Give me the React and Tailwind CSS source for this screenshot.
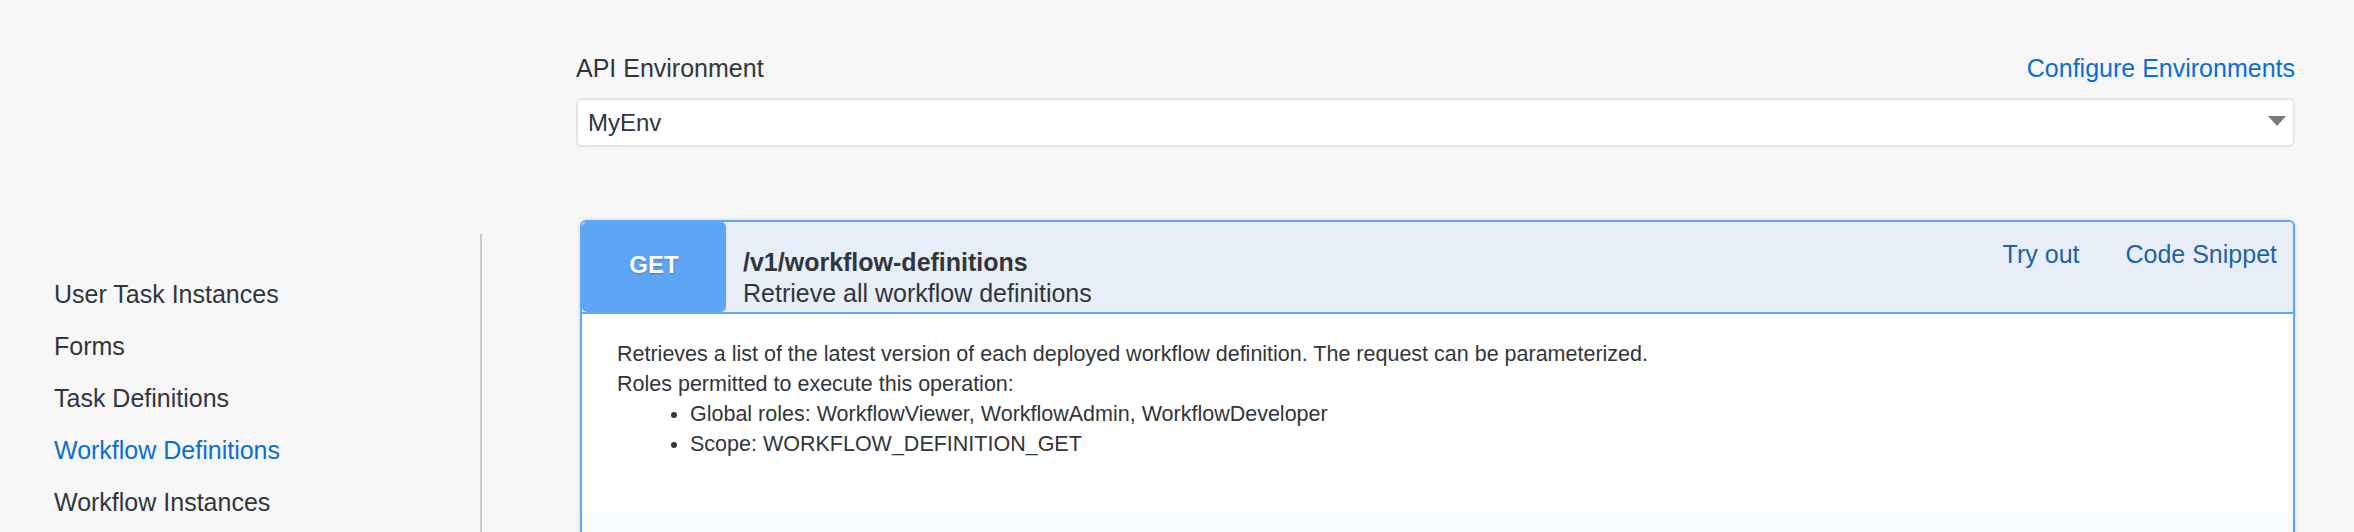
import { useState } from 'react';

const NAV = ['User Task Instances', 'Forms', 'Task Definitions', 'Workflow Definitions', 'Workflow Instances'];

const Sidebar = ({ active }) => (
  <aside className="w-[482px] shrink-0 mt-[234px] border-r-2 border-[#cccccc] pt-[34px]">
    {NAV.map(item => (
      <div
        key={item}
        className={`pl-[54px] h-[52px] leading-[52px] text-[25px] ${item === active ? 'text-[#0a6ed1]' : 'text-[#32363a]'}`}
      >
        {item}
      </div>
    ))}
  </aside>
);

const EnvSelect = ({ value }) => (
  <div>
    <div className="flex items-center justify-between leading-[30px] text-[25px]">
      <span className="text-[#32363a]">API Environment</span>
      <a className="text-[#0a6ed1] cursor-pointer">Configure Environments</a>
    </div>
    <div className="mt-[15px] h-[49px] bg-white border-2 border-[#e5e5e5] rounded-[6px] flex items-center justify-between pl-[10px] pr-[7px]">
      <span className="text-[24px] text-[#32363a]">{value}</span>
      <svg width="18" height="10" viewBox="0 0 18 10" className="-mt-[4px]">
        <polygon points="0,0 18,0 9,10" fill="#7a7a7a" />
      </svg>
    </div>
  </div>
);

const Endpoint = () => (
  <div className="mt-[73px] ml-[4px] border-2 border-[#62a6f5] rounded-t-[6px] shadow-[0_0_4px_rgba(0,0,0,0.15)] overflow-hidden">
    <div className="flex h-[92px] bg-[#e7eef7] border-b-2 border-[#62a6f5]">
      <div className="w-[144px] shrink-0 bg-[#5ea5f6] rounded-[5px] flex items-center justify-center pb-[4px]">
        <span className="text-white font-bold text-[24px] [text-shadow:0_1px_2px_rgba(0,0,0,0.25)]">GET</span>
      </div>
      <div className="flex-1 pl-[17px] pt-[25px]">
        <div className="font-bold text-[25px] leading-[30px] text-[#32363a]">/v1/workflow-definitions</div>
        <div className="text-[25px] leading-[33px] text-[#32363a]">Retrieve all workflow definitions</div>
      </div>
      <div className="flex gap-[46px] pt-[17px] pr-[16px] text-[25px] leading-[30px] text-[#2064a6]">
        <a className="cursor-pointer">Try out</a>
        <a className="cursor-pointer">Code Snippet</a>
      </div>
    </div>
    <div className="h-[199px] bg-white px-[35px] pt-[25px] text-[21.5px] leading-[30px] text-[#32363a]">
      <p>Retrieves a list of the latest version of each deployed workflow definition. The request can be parameterized.</p>
      <p>Roles permitted to execute this operation:</p>
      <ul className="list-disc pl-[73px]">
        <li>Global roles: WorkflowViewer, WorkflowAdmin, WorkflowDeveloper</li>
        <li>Scope: WORKFLOW_DEFINITION_GET</li>
      </ul>
    </div>
    <div className="h-[60px] bg-[#f7faff]"></div>
  </div>
);

export default function App() {
  const [env] = useState('MyEnv');
  return (
    <div className="w-[2354px] h-[532px] overflow-hidden bg-[#f7f7f7] flex font-['Liberation_Sans',Arial,sans-serif]">
      <Sidebar active="Workflow Definitions" />
      <main className="flex-1 pl-[94px] pr-[59px] pt-[53px]">
        <EnvSelect value={env} />
        <Endpoint />
      </main>
    </div>
  );
}
